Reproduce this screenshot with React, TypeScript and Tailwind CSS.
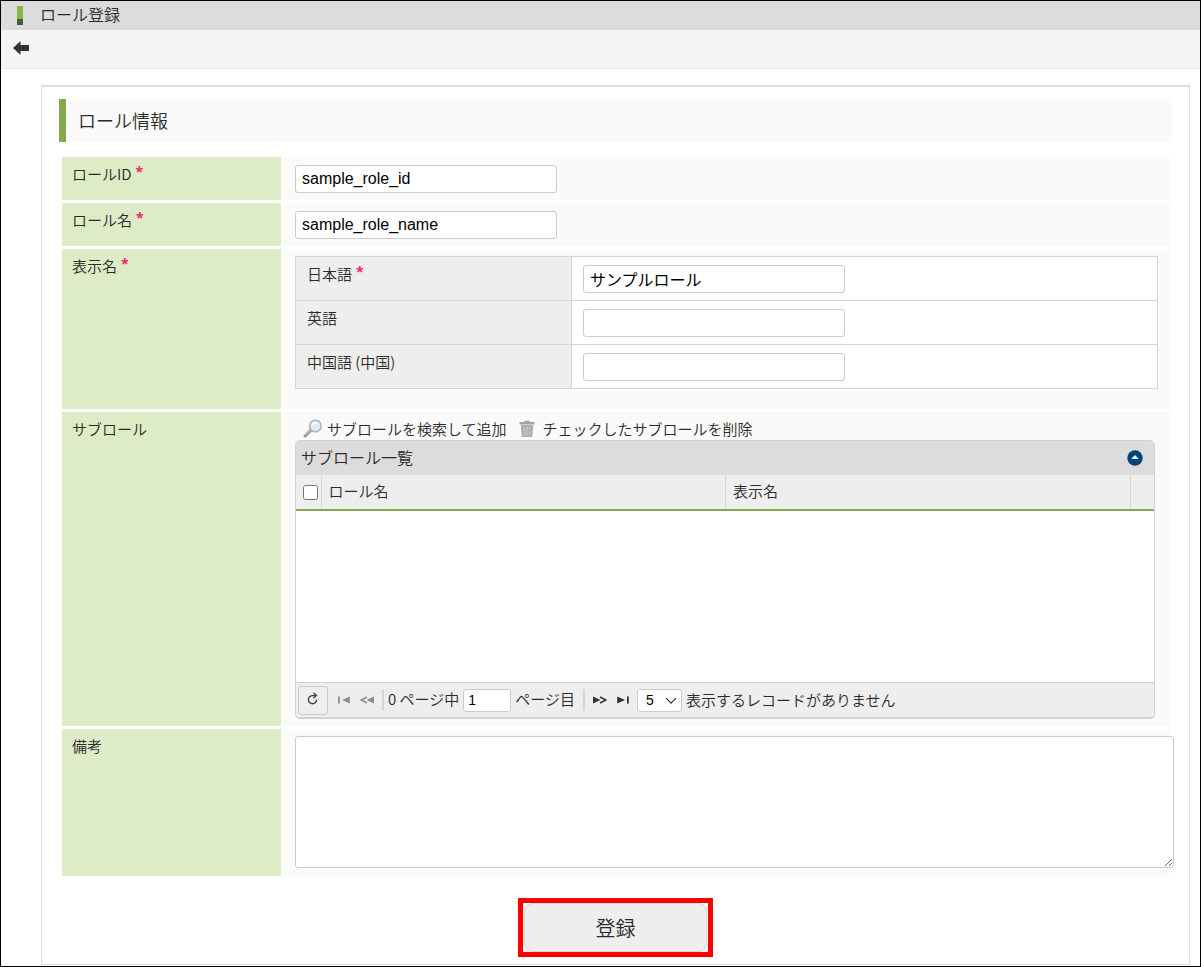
import { useState } from 'react';
import type { ReactNode } from 'react';

interface FormRowProps {
  label: string;
  htmlFor?: string;
  required?: boolean;
  className?: string;
  children: ReactNode;
}

const inputClass =
  "block h-[28px] w-[262px] rounded-[3px] border border-[#ccc] bg-white px-[6px] font-['Liberation_Sans','Noto_Sans_CJK_JP',sans-serif] text-base font-normal text-black outline-none";

function Required() {
  return (
    <span className="ml-1 h-5 font-['Open_Sans',sans-serif] text-sm leading-4 font-bold text-[#f0246a]">*</span>
  );
}

function FormRow({ label, htmlFor, required, className = '', children }: FormRowProps) {
  return (
    <div className="flex gap-[3px]">
      <div className="w-[219px] shrink-0 bg-[#ddebc6] px-[10px] pt-[7px]">
        <label htmlFor={htmlFor} className="flex h-5 items-center">
          {label}
          {required && <Required />}
        </label>
      </div>
      <div className={`min-w-0 flex-1 bg-[#fafafa] pl-[11px] ${className}`}>{children}</div>
    </div>
  );
}

function BackIcon() {
  return (
    <svg width="16" height="14" viewBox="0 0 16 14" fill="#333">
      <path d="M0 7 7.5 0v4H16v6H7.5v4z" />
    </svg>
  );
}

function SearchIcon() {
  return (
    <svg width="20" height="20" viewBox="0 0 20 20" fill="none">
      <path d="M2.2 16.8 7.5 11.7" stroke="#9b9b9f" strokeWidth="3.2" strokeLinecap="round" />
      <path d="M2.4 16 7 11.6" stroke="#c9c9cc" strokeWidth="1" strokeLinecap="round" />
      <circle cx="12.4" cy="7" r="5.8" fill="#dbeaf5" stroke="#b3b5bb" strokeWidth="1.6" />
      <path d="M8.6 6.8a4 4 0 0 1 4-3.8c1.6 0 2.6.8 3.2 1.8-2.6-.4-5 .2-7.2 2z" fill="#f6fbff" />
    </svg>
  );
}

function TrashIcon() {
  return (
    <svg width="16" height="18" viewBox="0 0 16 18">
      <path d="M5.5 2V.8h5V2H15.5v2.6H.5V2z" fill="#a3a3a6" />
      <path d="M1.8 5h12.4l-1 12H2.8z" fill="#adadb1" />
      <path d="M5 6.5 5.5 15.5M8 6.5v9M11 6.5l-.5 9" stroke="#d3d3d6" strokeWidth="0.8" fill="none" />
    </svg>
  );
}

function CollapseIcon() {
  return (
    <svg width="16" height="16" viewBox="0 0 16 16">
      <circle cx="8" cy="8" r="7.7" fill="#04427a" />
      <path d="M8 5 11.8 9H4.2z" fill="#fff" />
    </svg>
  );
}

function RefreshIcon() {
  return (
    <svg width="12" height="13" viewBox="0 0 12 13" fill="none" stroke="#444" strokeWidth="1.4">
      <path d="M9.6 7.6A4.1 4.1 0 1 1 5.6 3.6H9" />
      <path d="M6.4 .8 9.4 3.6 6.4 6.2" />
    </svg>
  );
}

function FirstIcon() {
  return (
    <svg width="12" height="8" viewBox="0 0 12 8" fill="#8c8c8c">
      <path d="M0 .5h1.8v7H0zM11.8.5v7L4 4z" />
    </svg>
  );
}

function PrevIcon() {
  return (
    <svg width="14" height="8" viewBox="0 0 14 8">
      <path d="M14 .5v7L6.5 4z" fill="#8c8c8c" />
      <path d="M7 1 1.2 4 7 7" fill="none" stroke="#8c8c8c" strokeWidth="1.6" />
    </svg>
  );
}

function NextIcon() {
  return (
    <svg width="14" height="8" viewBox="0 0 14 8">
      <path d="M0 .5v7L7.5 4z" fill="#333" />
      <path d="M7 1l5.8 3L7 7" fill="none" stroke="#333" strokeWidth="1.6" />
    </svg>
  );
}

function LastIcon() {
  return (
    <svg width="12" height="8" viewBox="0 0 12 8" fill="#333">
      <path d="M.2.5v7L8 4zM10 .5h1.8v7H10z" />
    </svg>
  );
}

function LocaleTable() {
  const [names, setNames] = useState<Record<string, string>>({ ja: 'サンプルロール', en: '', zh: '' });

  const locales = [
    { id: 'ja', label: '日本語', required: true },
    { id: 'en', label: '英語', required: false },
    { id: 'zh', label: '中国語 (中国)', required: false },
  ];

  return (
    <table className="w-full border-collapse bg-white">
      <tbody>
        {locales.map((locale) => (
          <tr key={locale.id} className="h-[44px]">
            <th className="w-[276px] border border-[#d5d5d5] bg-[#eee] px-[11px] pt-[7px] text-left align-top font-[350]">
              <label htmlFor={`name-${locale.id}`} className="flex h-5 items-center">
                {locale.label}
                {locale.required && <Required />}
              </label>
            </th>
            <td className="border border-[#d5d5d5] px-[11px] pt-2 pb-[7px] align-top">
              <input
                id={`name-${locale.id}`}
                type="text"
                className={inputClass}
                value={names[locale.id]}
                onChange={(e) => setNames({ ...names, [locale.id]: e.target.value })}
              />
            </td>
          </tr>
        ))}
      </tbody>
    </table>
  );
}

function SubRoleGrid() {
  return (
    <div className="overflow-hidden rounded-[5px] border border-[#d3d3d3] border-b-2 bg-white">
      <div className="flex h-[34px] items-center justify-between bg-[#dcdcdc] pr-[11px] pl-[5px]">
        <span className="pb-[2px] text-base leading-5">サブロール一覧</span>
        <button type="button" aria-label="折りたたむ">
          <CollapseIcon />
        </button>
      </div>
      <table className="w-full table-fixed border-collapse">
        <thead>
          <tr className="h-[35px] border-b-2 border-[#86ad4b] bg-[#eee] text-left">
            <th className="w-[25px] border-r border-[#d8d8d8] pl-[7px]">
              <input type="checkbox" aria-label="すべて選択" className="block size-[15px]" />
            </th>
            <th className="border-r border-[#d8d8d8] pb-[2px] pl-[7px] font-[350]">ロール名</th>
            <th className="border-r border-[#d8d8d8] pb-[2px] pl-[7px] font-[350]">表示名</th>
            <th className="w-[24px]" />
          </tr>
        </thead>
      </table>
      <div className="h-[171px]" />
      {/* Pager */}
      <div className="flex h-[35px] items-center border-t border-[#d3d3d3] bg-[#eee] pl-[2px]">
        <button
          type="button"
          aria-label="再読み込み"
          className="flex h-[29px] w-[30px] items-center justify-center rounded-[3px] border border-[#ccc] pb-1"
        >
          <RefreshIcon />
        </button>
        <button type="button" aria-label="最初のページ" className="ml-[10px]">
          <FirstIcon />
        </button>
        <button type="button" aria-label="前のページ" className="ml-[10px]">
          <PrevIcon />
        </button>
        <span className="ml-2 h-[22px] w-[2px] bg-[#d5d5d5]" />
        <label htmlFor="page" className="ml-1 pb-[2px]">0 ページ中</label>
        <input
          id="page"
          type="text"
          defaultValue="1"
          className="ml-1 h-[23px] w-[48px] rounded-[3px] border border-[#ccc] bg-white px-1 font-['Liberation_Sans',sans-serif] text-sm font-normal text-black"
        />
        <span className="ml-1 pb-[2px]">ページ目</span>
        <span className="ml-2 h-[22px] w-[2px] bg-[#d5d5d5]" />
        <button type="button" aria-label="次のページ" className="ml-2">
          <NextIcon />
        </button>
        <button type="button" aria-label="最後のページ" className="ml-[10px]">
          <LastIcon />
        </button>
        <div className="relative ml-2">
          <select
            aria-label="表示件数"
            defaultValue="5"
            className="block h-[23px] w-[45px] appearance-none rounded-[3px] border border-[#ccc] bg-white pl-2 font-['Liberation_Sans',sans-serif] text-sm leading-none font-normal text-black"
          >
            <option>5</option>
            <option>10</option>
            <option>20</option>
          </select>
          <svg
            className="pointer-events-none absolute top-2 right-[5px]"
            width="12"
            height="8"
            viewBox="0 0 12 8"
            fill="none"
            stroke="#333"
            strokeWidth="1.2"
          >
            <path d="M1 1.2l5 5 5-5" />
          </svg>
        </div>
        <span className="ml-1">表示するレコードがありません</span>
      </div>
    </div>
  );
}

export default function App() {
  return (
    <div className="min-h-screen border border-black bg-white font-['Noto_Sans_CJK_JP',sans-serif] text-[15px] leading-5 font-[350] text-[#2a2a2a]">
      <header className="flex h-[29px] items-center bg-[#dcdcdc] pl-4">
        <span className="flex h-[19px] w-[6px] flex-col bg-[#8bb54b]">
          <span className="mt-auto h-[6px] bg-[#4a5a3a]" />
        </span>
        <h1 className="ml-[17px] pb-1 text-base leading-5 font-[350]">ロール登録</h1>
      </header>
      <nav className="flex h-[39px] items-center border-b border-[#e8e8e8] bg-[#f4f4f4] pb-[2px] pl-3">
        <a href="#" aria-label="戻る">
          <BackIcon />
        </a>
      </nav>

      <main className="mt-4 mr-[10px] ml-10 border border-t-2 border-[#ddd] px-[17px] pt-3 pb-[7px]">
        <h2 className="flex h-[43px] items-center border-l-[7px] border-[#82aa4b] bg-[#fafafa] pb-[2px] pl-3 text-lg font-[350]">
          ロール情報
        </h2>

        <form className="mt-[15px]" onSubmit={(e) => e.preventDefault()}>
          <div className="mr-[2px] ml-[3px] flex flex-col gap-[3px]">
            <FormRow label="ロールID" htmlFor="role-id" required className="pt-2 pb-[7px]">
              <input id="role-id" type="text" defaultValue="sample_role_id" className={inputClass} />
            </FormRow>
            <FormRow label="ロール名" htmlFor="role-name" required className="pt-2 pb-[7px]">
              <input id="role-name" type="text" defaultValue="sample_role_name" className={inputClass} />
            </FormRow>
            <FormRow label="表示名" htmlFor="name-ja" required className="pt-[7px] pr-3 pb-5">
              <LocaleTable />
            </FormRow>
            <FormRow label="サブロール" className="pt-[7px] pr-[15px] pb-[7px]">
              <div className="flex h-[21px] items-start pl-2">
                <button type="button" className="flex items-center gap-1">
                  <SearchIcon />
                  サブロールを検索して追加
                </button>
                <button type="button" className="ml-3 flex items-center gap-2">
                  <TrashIcon />
                  チェックしたサブロールを削除
                </button>
              </div>
              <SubRoleGrid />
            </FormRow>
            <FormRow label="備考" htmlFor="notes" className="pt-[7px] pb-2">
              <div className="-mr-1">
                <textarea
                  id="notes"
                  className="block h-[132px] w-full rounded-[3px] border border-[#ccc] bg-white p-2 text-base"
                />
              </div>
            </FormRow>
          </div>

          <div className="mt-[22px] flex justify-center">
            <div className="border-[5px] border-[#f00] px-px">
              <button
                type="submit"
                className="block h-[49px] w-[183px] rounded-lg border border-[#d5d5d5] bg-[#eee] text-xl font-[350]"
              >
                登録
              </button>
            </div>
          </div>
        </form>
      </main>
    </div>
  );
}
